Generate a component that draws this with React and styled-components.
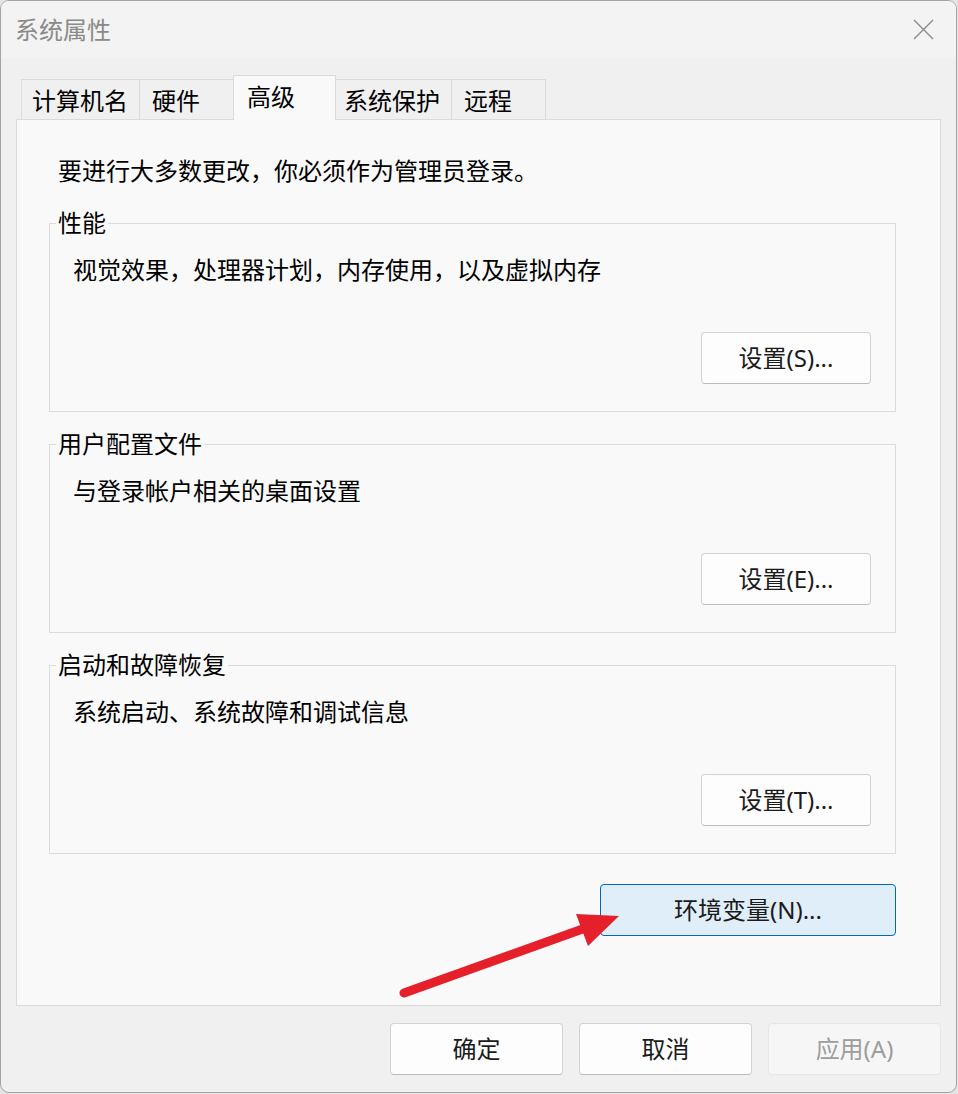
import React from 'react'
import styled, { createGlobalStyle } from 'styled-components'

const GlobalStyle = createGlobalStyle`
    html, body {
        margin: 0;
        padding: 0;
        background: #e4e4e4;
    }
    body {
        font-family: "Noto Sans", "Noto Sans CJK SC", sans-serif;
        color: #000000;
    }
    * {
        box-sizing: border-box;
    }
`

const Window = styled.div`
    position: relative;
    width: 957px;
    height: 1093px;
    border: 1px solid #a4a4a4;
    border-radius: 9px;
    background: #f0f0f0;
    overflow: hidden;
    display: flex;
    flex-direction: column;
`

const TitleBar = styled.div`
    height: 57px;
    flex: none;
    display: flex;
    align-items: center;
    justify-content: space-between;
    padding: 0 22px 0 14px;
    background: #f3f3f3;
`

const Title = styled.span`
    font-size: 24px;
    line-height: 30px;
    color: #8a8a8a;
`

const CloseButton = styled.button`
    width: 21px;
    height: 21px;
    padding: 0;
    border: none;
    background: transparent;
    display: flex;
`

const TabRow = styled.div`
    display: flex;
    align-items: flex-end;
    margin: 17px 0 0 20px;
`

const Tab = styled.div`
    position: relative;
    width: ${props => props.width}px;
    height: ${props => props.active ? 45 : 40}px;
    margin-left: ${props => props.first ? 0 : -1}px;
    margin-bottom: ${props => props.active ? -1 : 0}px;
    padding: 6px 0 0 ${props => props.pad}px;
    border: 1px solid #dadada;
    border-bottom: none;
    background: ${props => props.active ? '#f9f9f9' : '#f0f0f0'};
    z-index: ${props => props.active ? 2 : 1};
    font-size: 24px;
    line-height: 30px;
    white-space: nowrap;
`

const Panel = styled.div`
    margin: 0 15px;
    padding: 36px 44px 69px 32px;
    border: 1px solid #dadada;
    background: #f9f9f9;
    display: flex;
    flex-direction: column;
`

const Notice = styled.p`
    margin: 0 0 0 9px;
    font-size: 24px;
    line-height: 30px;
`

const Group = styled.fieldset`
    margin: ${props => props.first ? 22 : 17}px 0 0 0;
    padding: 17px 24px 27px 6px;
    border: 1px solid #dcdcdc;
    min-width: 0;
`

const Legend = styled.legend`
    padding: 0 2px;
    font-size: 24px;
    line-height: 30px;
`

const Desc = styled.p`
    margin: 0 0 0 17px;
    font-size: 24px;
    line-height: 30px;
`

const ButtonRow = styled.div`
    display: flex;
    justify-content: flex-end;
    gap: ${props => props.gap || 0}px;
    margin-top: ${props => props.top}px;
`

const FooterRow = styled(ButtonRow)`
    margin-right: 15px;
`

const Button = styled.button`
    width: ${props => props.width}px;
    height: 52px;
    padding: 0;
    border: 1px solid ${props => props.primary ? '#0067c0' : props.disabled ? '#e6e6e6' : '#d3d3d3'};
    border-bottom-color: ${props => props.primary ? '#0067c0' : props.disabled ? '#e6e6e6' : '#bcbcbc'};
    border-radius: 4px;
    background: ${props => props.primary ? '#e0eef9' : props.disabled ? '#f6f6f6' : '#fdfdfd'};
    color: ${props => props.disabled ? '#9d9d9d' : '#1b1b1b'};
    font-family: "Noto Sans", "Noto Sans CJK SC", sans-serif;
    font-size: 24px;
    line-height: 30px;
    text-align: center;
`

const ArrowLayer = styled.svg`
    position: absolute;
    left: 0;
    top: 0;
    width: 100%;
    height: 100%;
    pointer-events: none;
    z-index: 5;
`

const tabs = [
    { label: '计算机名', width: 119, pad: 10 },
    { label: '硬件', width: 95, pad: 12 },
    { label: '高级', width: 103, pad: 13, active: true },
    { label: '系统保护', width: 117, pad: 8 },
    { label: '远程', width: 95, pad: 12 },
]

const groups = [
    { title: '性能', desc: '视觉效果，处理器计划，内存使用，以及虚拟内存', button: '设置(S)...' },
    { title: '用户配置文件', desc: '与登录帐户相关的桌面设置', button: '设置(E)...' },
    { title: '启动和故障恢复', desc: '系统启动、系统故障和调试信息', button: '设置(T)...' },
]

const App = () => {
  return (
    <>
        <GlobalStyle />
        <Window>
            <TitleBar>
                <Title>系统属性</Title>
                <CloseButton aria-label='关闭'>
                    <svg width='21' height='21' viewBox='0 0 21 21'>
                        <path d='M1 1 L20 20 M20 1 L1 20' stroke='#8a8a8a' strokeWidth='1.4' fill='none' />
                    </svg>
                </CloseButton>
            </TitleBar>

            <TabRow>
                {tabs.map((t, i) => (
                    <Tab key={t.label} width={t.width} pad={t.pad} active={t.active} first={i === 0}>{t.label}</Tab>
                ))}
            </TabRow>

            <Panel>
                <Notice>要进行大多数更改，你必须作为管理员登录。</Notice>
                {groups.map((g, i) => (
                    <Group key={g.title} first={i === 0}>
                        <Legend>{g.title}</Legend>
                        <Desc>{g.desc}</Desc>
                        <ButtonRow top={47}>
                            <Button width={170}>{g.button}</Button>
                        </ButtonRow>
                    </Group>
                ))}
                <ButtonRow top={30}>
                    <Button width={296} primary>环境变量(N)...</Button>
                </ButtonRow>
            </Panel>

            <FooterRow top={17} gap={16}>
                <Button width={173}>确定</Button>
                <Button width={173}>取消</Button>
                <Button width={173} disabled>应用(A)</Button>
            </FooterRow>

            <ArrowLayer viewBox='0 0 955 1091'>
                <line x1='403' y1='992' x2='590' y2='925' stroke='#e5202a' strokeWidth='9' strokeLinecap='round' />
                <polygon points='575,913 618,915 587,945' fill='#e5202a' />
            </ArrowLayer>
        </Window>
    </>
  )
}

export default App
